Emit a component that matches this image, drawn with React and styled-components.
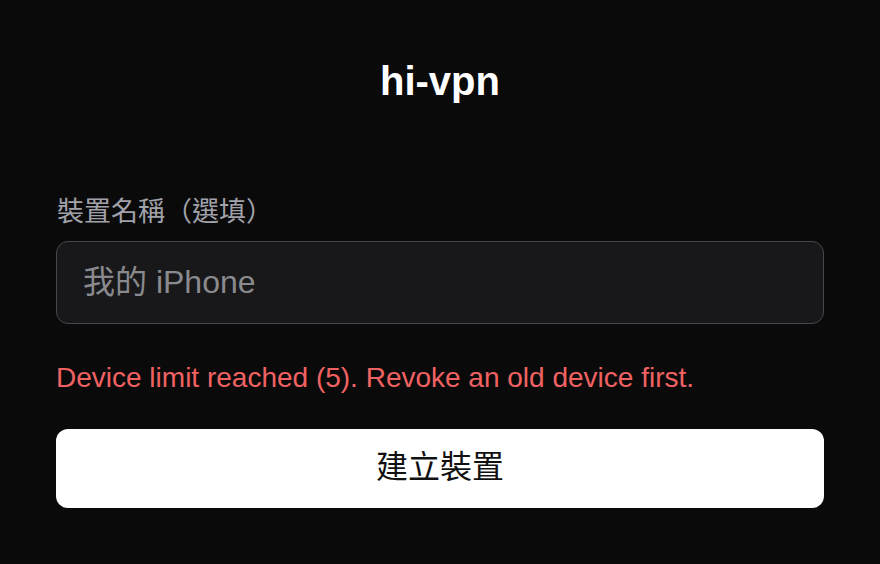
import React from "react";
import styled, { createGlobalStyle } from "styled-components";

const Global = createGlobalStyle`
  html, body { margin: 0; padding: 0; background: #0a0a0b; }
  body { font-family: "Liberation Sans", Arial, "Noto Sans CJK TC", sans-serif; }
  * { box-sizing: border-box; }
`;

const Page = styled.main`
  max-width: 768px;
  margin: 0 auto;
  padding-top: 61px;
  display: flex;
  flex-direction: column;
`;

const Title = styled.h1`
  margin: 0;
  font-size: 40px;
  line-height: 40px;
  font-weight: 700;
  color: #ffffff;
  text-align: center;
`;

const Form = styled.form`
  margin-top: 93px;
  display: flex;
  flex-direction: column;
`;

const Label = styled.label`
  font-family: "Liberation Sans", "Noto Sans CJK TC", sans-serif;
  font-size: 27px;
  line-height: 36px;
  color: #a1a1aa;
  padding-left: 1px;
  white-space: nowrap;
`;

const Input = styled.input`
  margin-top: 11px;
  height: 83px;
  width: 100%;
  padding: 0 26px;
  background: #18181b;
  border: 1.6px solid #46464d;
  border-radius: 12px;
  color: #f4f4f5;
  font-family: "Liberation Sans", Arial, "Noto Sans CJK TC", sans-serif;
  font-size: 32px;
  outline: none;
  &::placeholder { color: #8a8a8e; opacity: 1; }
`;

const ErrorText = styled.p`
  margin: 36px 0 0;
  font-size: 28px;
  line-height: 36px;
  color: #f06262;
`;

const Button = styled.button`
  margin-top: 33px;
  height: 79px;
  width: 100%;
  padding: 0 0 10px;
  border: none;
  border-radius: 12px;
  background: #ffffff;
  color: #111111;
  font-family: "Liberation Sans", Arial, "Noto Sans CJK TC", sans-serif;
  font-size: 32px;
  cursor: pointer;
`;

export default function App() {
  return (
    <>
      <Global />
      <Page lang="zh-TW">
        <Title>hi-vpn</Title>
        <Form onSubmit={(e) => e.preventDefault()}>
          <Label htmlFor="name">裝置名稱（選填）</Label>
          <Input id="name" placeholder="我的 iPhone" />
          <ErrorText>Device limit reached (5). Revoke an old device first.</ErrorText>
          <Button type="submit">建立裝置</Button>
        </Form>
      </Page>
    </>
  );
}
